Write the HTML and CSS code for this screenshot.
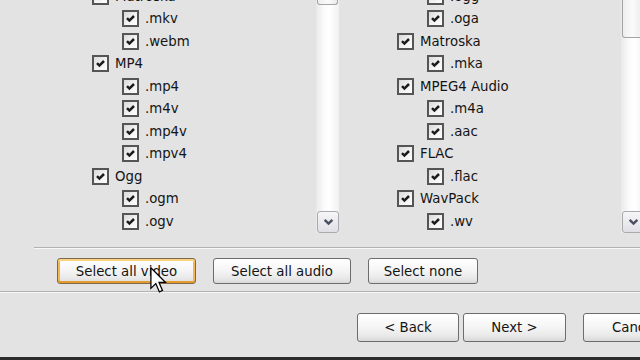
FILE: index.html
```html
<!DOCTYPE html>
<html>
<head>
<meta charset="utf-8">
<link rel="stylesheet" href="styles.css">
</head>
<body>
<div class="dialog">
  <div class="lists">
    <div class="panel">
      <div class="list">
        <div class="row first"><span class="cb"><svg viewBox="0 0 13 13"><polyline points="3,6.2 5.4,8.6 10,4"/></svg></span><span>Matroska</span></div>
        <div class="row sub"><span class="cb"><svg viewBox="0 0 13 13"><polyline points="3,6.2 5.4,8.6 10,4"/></svg></span><span>.mkv</span></div>
        <div class="row sub"><span class="cb"><svg viewBox="0 0 13 13"><polyline points="3,6.2 5.4,8.6 10,4"/></svg></span><span>.webm</span></div>
        <div class="row"><span class="cb"><svg viewBox="0 0 13 13"><polyline points="3,6.2 5.4,8.6 10,4"/></svg></span><span>MP4</span></div>
        <div class="row sub"><span class="cb"><svg viewBox="0 0 13 13"><polyline points="3,6.2 5.4,8.6 10,4"/></svg></span><span>.mp4</span></div>
        <div class="row sub"><span class="cb"><svg viewBox="0 0 13 13"><polyline points="3,6.2 5.4,8.6 10,4"/></svg></span><span>.m4v</span></div>
        <div class="row sub"><span class="cb"><svg viewBox="0 0 13 13"><polyline points="3,6.2 5.4,8.6 10,4"/></svg></span><span>.mp4v</span></div>
        <div class="row sub"><span class="cb"><svg viewBox="0 0 13 13"><polyline points="3,6.2 5.4,8.6 10,4"/></svg></span><span>.mpv4</span></div>
        <div class="row"><span class="cb"><svg viewBox="0 0 13 13"><polyline points="3,6.2 5.4,8.6 10,4"/></svg></span><span>Ogg</span></div>
        <div class="row sub"><span class="cb"><svg viewBox="0 0 13 13"><polyline points="3,6.2 5.4,8.6 10,4"/></svg></span><span>.ogm</span></div>
        <div class="row sub"><span class="cb"><svg viewBox="0 0 13 13"><polyline points="3,6.2 5.4,8.6 10,4"/></svg></span><span>.ogv</span></div>
      </div>
      <div class="vscroll">
        <div class="thumb thumb-short"></div>
        <div class="track"></div>
        <div class="sbtn"><svg viewBox="0 0 10 7" class="chev"><polyline points="1.5,1.5 5,5 8.5,1.5"/></svg></div>
      </div>
    </div>
    <div class="panel">
      <div class="list">
        <div class="row sub first"><span class="cb"><svg viewBox="0 0 13 13"><polyline points="3,6.2 5.4,8.6 10,4"/></svg></span><span>.ogg</span></div>
        <div class="row sub"><span class="cb"><svg viewBox="0 0 13 13"><polyline points="3,6.2 5.4,8.6 10,4"/></svg></span><span>.oga</span></div>
        <div class="row"><span class="cb"><svg viewBox="0 0 13 13"><polyline points="3,6.2 5.4,8.6 10,4"/></svg></span><span>Matroska</span></div>
        <div class="row sub"><span class="cb"><svg viewBox="0 0 13 13"><polyline points="3,6.2 5.4,8.6 10,4"/></svg></span><span>.mka</span></div>
        <div class="row"><span class="cb"><svg viewBox="0 0 13 13"><polyline points="3,6.2 5.4,8.6 10,4"/></svg></span><span>MPEG4 Audio</span></div>
        <div class="row sub"><span class="cb"><svg viewBox="0 0 13 13"><polyline points="3,6.2 5.4,8.6 10,4"/></svg></span><span>.m4a</span></div>
        <div class="row sub"><span class="cb"><svg viewBox="0 0 13 13"><polyline points="3,6.2 5.4,8.6 10,4"/></svg></span><span>.aac</span></div>
        <div class="row"><span class="cb"><svg viewBox="0 0 13 13"><polyline points="3,6.2 5.4,8.6 10,4"/></svg></span><span>FLAC</span></div>
        <div class="row sub"><span class="cb"><svg viewBox="0 0 13 13"><polyline points="3,6.2 5.4,8.6 10,4"/></svg></span><span>.flac</span></div>
        <div class="row"><span class="cb"><svg viewBox="0 0 13 13"><polyline points="3,6.2 5.4,8.6 10,4"/></svg></span><span>WavPack</span></div>
        <div class="row sub"><span class="cb"><svg viewBox="0 0 13 13"><polyline points="3,6.2 5.4,8.6 10,4"/></svg></span><span>.wv</span></div>
      </div>
      <div class="vscroll">
        <div class="thumb thumb-long"></div>
        <div class="track"></div>
        <div class="sbtn"><svg viewBox="0 0 10 7" class="chev"><polyline points="1.5,1.5 5,5 8.5,1.5"/></svg></div>
      </div>
    </div>
  </div>

  <div class="sep sep-top"></div>

  <div class="actions">
    <button class="btn btn-video hover">Select all video</button>
    <button class="btn btn-audio">Select all audio</button>
    <button class="btn btn-none">Select none</button>
  </div>

  <div class="sep sep-bottom"></div>

  <div class="nav">
    <button class="btn nbtn back">&lt; Back</button>
    <button class="btn nbtn next">Next &gt;</button>
    <button class="btn nbtn cancel">Cancel</button>
  </div>

  <div class="taskbar"></div>

  <svg class="cursor" viewBox="0 0 13 21" width="17" height="27">
    <path d="M0.6,0.6 V16.6 L4.4,12.9 L7.2,19.4 L9.6,18.3 L6.9,12 L12,12 Z"/>
  </svg>
</div>
</body>
</html>
```

FILE: styles.css
```css
html, body {
  margin: 0;
  padding: 0;
}

body {
  width: 640px;
  height: 360px;
  overflow: hidden;
  background: #e3e3e3;
  font-family: "DejaVu Sans", "Liberation Sans", sans-serif;
  font-size: 13.3px;
  color: #141414;
}

.dialog {
  position: relative;
  height: 360px;
  display: flex;
  flex-direction: column;
}

/* ---- lists ---- */
.lists {
  display: flex;
  padding-left: 34px;
  height: 233px;
  flex: none;
  overflow: hidden;
}

.panel {
  width: 305px;
  flex: none;
  display: flex;
}

.list {
  flex: 1;
  display: flex;
  flex-direction: column;
  padding-left: 58px;
  overflow: hidden;
}

.row {
  height: 22.5px;
  flex: none;
  display: flex;
  align-items: center;
  gap: 6px;
  white-space: nowrap;
}

.row.sub {
  padding-left: 30px;
}

.row.first {
  margin-top: -15.25px;
}

.cb {
  width: 17px;
  height: 17px;
  flex: none;
  box-sizing: border-box;
  border: 2px solid #555555;
  background: linear-gradient(135deg, #dadada, #f4f4f4 60%, #fdfdfd);
  display: flex;
}

.cb svg {
  width: 13px;
  height: 13px;
}

.cb polyline {
  fill: none;
  stroke: #1c1c1c;
  stroke-width: 2.5;
}

/* ---- scrollbars ---- */
.vscroll {
  width: 23px;
  flex: none;
  display: flex;
  flex-direction: column;
  background: linear-gradient(90deg, #e9e9e9, #fbfbfb 35%, #ffffff 60%, #f1f1f1);
}

.thumb {
  box-sizing: border-box;
  margin: 0 1px;
  border: 1px solid #a4a4a4;
  border-top: none;
  border-radius: 0 0 3px 3px;
  background: linear-gradient(90deg, #eeeeee, #fafafa 50%, #ececec);
}

.thumb-short {
  height: 5px;
}

.thumb-long {
  height: 38px;
}

.track {
  flex: 1;
}

.sbtn {
  height: 22px;
  box-sizing: border-box;
  margin-left: 1px;
  border: 1px solid #a9a9ae;
  border-radius: 3px;
  background: linear-gradient(#f6f6f8, #dfdfe6);
  display: flex;
  align-items: center;
  justify-content: center;
}

.chev {
  width: 11px;
  height: 8px;
}

.chev polyline {
  fill: none;
  stroke: #4a5060;
  stroke-width: 2.2;
}

/* ---- separators ---- */
.sep {
  height: 0;
  flex: none;
  border-top: 1px solid #b1b1b1;
  border-bottom: 1px solid #f7f7f7;
}

.sep-top {
  margin: 14px 0 0 34px;
}

.sep-bottom {
  margin-top: 7px;
}

/* ---- buttons ---- */
.btn {
  box-sizing: border-box;
  padding: 0;
  border: 1px solid #6c6c6c;
  border-radius: 3px;
  background: linear-gradient(#ffffff, #f6f6f6 45%, #e9e9e9 80%, #d9d9d9);
  font: inherit;
  color: #141414;
  display: flex;
  align-items: center;
  justify-content: center;
  flex: none;
}

.actions {
  display: flex;
  gap: 17px;
  padding-left: 57px;
  margin-top: 9px;
  flex: none;
}

.actions .btn {
  height: 26px;
}

.btn-video { width: 139px; }
.btn-audio { width: 138px; }
.btn-none { width: 110px; }

.btn.hover {
  border-color: #7d6a4c;
  box-shadow: inset 0 2px 0 #fcd27e, inset 0 -2px 0 #e59b2e, inset 2px 0 0 #f4b651, inset -2px 0 0 #f4b651;
}

.nav {
  display: flex;
  padding-left: 357px;
  margin-top: 20px;
  flex: none;
}

.nbtn {
  height: 29px;
  width: 103px;
}

.back {
  width: 102px;
  margin-right: 4px;
}

.next {
  margin-right: 17px;
}

.taskbar {
  margin-top: 15px;
  flex: 1;
  background: #2c2c2c;
}

/* ---- mouse pointer overlay ---- */
.cursor {
  position: absolute;
  left: 150px;
  top: 267px;
}

.cursor path {
  fill: #ffffff;
  stroke: #000000;
  stroke-width: 1;
  stroke-linejoin: miter;
}
```
